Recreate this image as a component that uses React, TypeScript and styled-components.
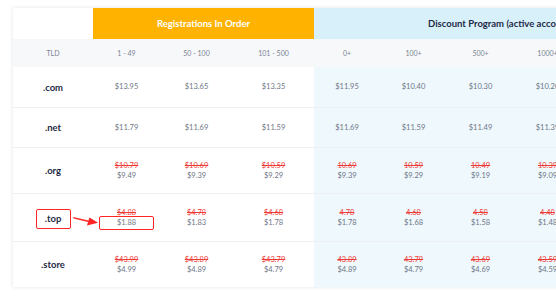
import React from "react";
import styled, { createGlobalStyle } from "styled-components";

const Global = createGlobalStyle`
  html, body { margin: 0; padding: 0; background: #ffffff; overflow: hidden; }
  body { font-family: Lato, "Open Sans", sans-serif; }
`;

const COLS = "80px 67px 73px 81px 66px 67px 67px 67px 67px";

const Page = styled.div`
  width: 556px;
  height: 299px;
  overflow: hidden;
  padding: 8px 0 0 13px;
  box-sizing: border-box;
`;

const Card = styled.div`
  width: 635px;
  background: #fff;
  box-shadow: 0 0 4px rgba(20, 30, 60, 0.12);
`;

const Row = styled.div<{ $h: number; $line?: boolean }>`
  display: grid;
  grid-template-columns: ${COLS};
  height: ${(p) => p.$h}px;
  position: relative;
  border-top: ${(p) => (p.$line ? "1px solid #eef0f3" : "none")};
  box-sizing: border-box;
`;

const BlankHead = styled.div`
  background: #fff;
`;

const RegHead = styled.div`
  grid-column: span 3;
  background: #ffb300;
  color: #fff;
  font-weight: 700;
  font-size: 9.5px;
  display: flex;
  align-items: center;
  justify-content: center;
`;

const DiscHead = styled.div`
  grid-column: span 5;
  background: #d8f0fa;
  color: #1f2a48;
  font-weight: 700;
  font-size: 9.5px;
  display: flex;
  align-items: center;
  padding-left: 114px;
  white-space: nowrap;
`;

const Label = styled.div`
  background: #f6f8fa;
  color: #7b8392;
  font-size: 7px;
  display: flex;
  align-items: center;
  justify-content: center;
`;

const TldCell = styled.div`
  display: flex;
  align-items: center;
  justify-content: center;
  color: #1f2a44;
  font-weight: 700;
  font-size: 9.5px;
`;

const PriceCell = styled.div<{ $disc?: boolean }>`
  background: ${(p) => (p.$disc ? "#eef8fd" : "#fff")};
  display: flex;
  flex-direction: column;
  align-items: center;
  justify-content: center;
  font-size: 7.5px;
  line-height: 10px;
  color: #6e7685;
  white-space: nowrap;
`;

const Old = styled.span`
  color: #ee3b36;
  text-decoration: line-through;
`;

const Mark = styled.span`
  display: inline-flex;
  align-items: center;
  justify-content: center;
  width: 35px;
  height: 20px;
  border: 1.5px solid #ff2525;
  border-radius: 2px;
  box-sizing: border-box;
  margin-top: 2px;
`;

const PriceMark = styled.span`
  display: flex;
  align-items: center;
  justify-content: center;
  width: 55px;
  height: 14px;
  margin: -2px 0 -2px;
  border: 1.5px solid #ff2525;
  border-radius: 2px;
  box-sizing: border-box;
`;

const Arrow = styled.svg`
  position: absolute;
  left: 0;
  top: 0;
  width: 100px;
  height: 48px;
  pointer-events: none;
`;

type Price = { old?: string; now: string };

const p = (now: string, old?: string): Price => ({ now, old });

const rows: { tld: string; h: number; prices: Price[] }[] = [
  {
    tld: ".com",
    h: 40,
    prices: [p("$13.95"), p("$13.65"), p("$13.35"), p("$11.95"), p("$10.40"), p("$10.30"), p("$10.20"), p("$10.10")],
  },
  {
    tld: ".net",
    h: 40,
    prices: [p("$11.79"), p("$11.69"), p("$11.59"), p("$11.69"), p("$11.59"), p("$11.49"), p("$11.39"), p("$11.29")],
  },
  {
    tld: ".org",
    h: 46,
    prices: [
      p("$9.49", "$10.79"),
      p("$9.39", "$10.69"),
      p("$9.29", "$10.59"),
      p("$9.39", "10.69"),
      p("$9.29", "10.59"),
      p("$9.19", "10.49"),
      p("$9.09", "10.39"),
      p("$8.99", "10.29"),
    ],
  },
  {
    tld: ".top",
    h: 48,
    prices: [
      p("$1.88", "$4.88"),
      p("$1.83", "$4.78"),
      p("$1.78", "$4.68"),
      p("$1.78", "4.78"),
      p("$1.68", "4.68"),
      p("$1.58", "4.58"),
      p("$1.48", "4.48"),
      p("$1.38", "4.38"),
    ],
  },
  {
    tld: ".store",
    h: 46,
    prices: [
      p("$4.99", "$43.99"),
      p("$4.89", "$43.89"),
      p("$4.79", "$43.79"),
      p("$4.89", "43.89"),
      p("$4.79", "43.79"),
      p("$4.69", "43.69"),
      p("$4.59", "43.59"),
      p("$4.49", "43.49"),
    ],
  },
];

const labels = ["1 - 49", "50 - 100", "101 - 500", "0+", "100+", "500+", "1000+", "5000+"];

export default function App() {
  return (
    <Page>
      <Global />
      <Card>
        <Row $h={31}>
          <BlankHead />
          <RegHead>Registrations In Order</RegHead>
          <DiscHead>Discount Program (active accounts only)</DiscHead>
        </Row>
        <Row $h={28}>
          <Label>TLD</Label>
          {labels.map((l) => (
            <Label key={l}>{l}</Label>
          ))}
        </Row>
        {rows.map((r, ri) => {
          const marked = r.tld === ".top";
          return (
            <Row key={r.tld} $h={r.h} $line={ri > 0}>
              <TldCell>{marked ? <Mark>{r.tld}</Mark> : r.tld}</TldCell>
              {r.prices.map((pr, i) => (
                <PriceCell key={i} $disc={i >= 3}>
                  {pr.old && <Old>{pr.old}</Old>}
                  {marked && i === 0 ? <PriceMark>{pr.now}</PriceMark> : <span>{pr.now}</span>}
                </PriceCell>
              ))}
              {marked && (
                <Arrow viewBox="0 0 100 48">
                  <polygon
                    points="60,23 60.6,24.6 75,28 74,31.5 85,28.8 76.5,23.5 75.5,26.6"
                    fill="#ff2525"
                  />
                </Arrow>
              )}
            </Row>
          );
        })}
      </Card>
    </Page>
  );
}
